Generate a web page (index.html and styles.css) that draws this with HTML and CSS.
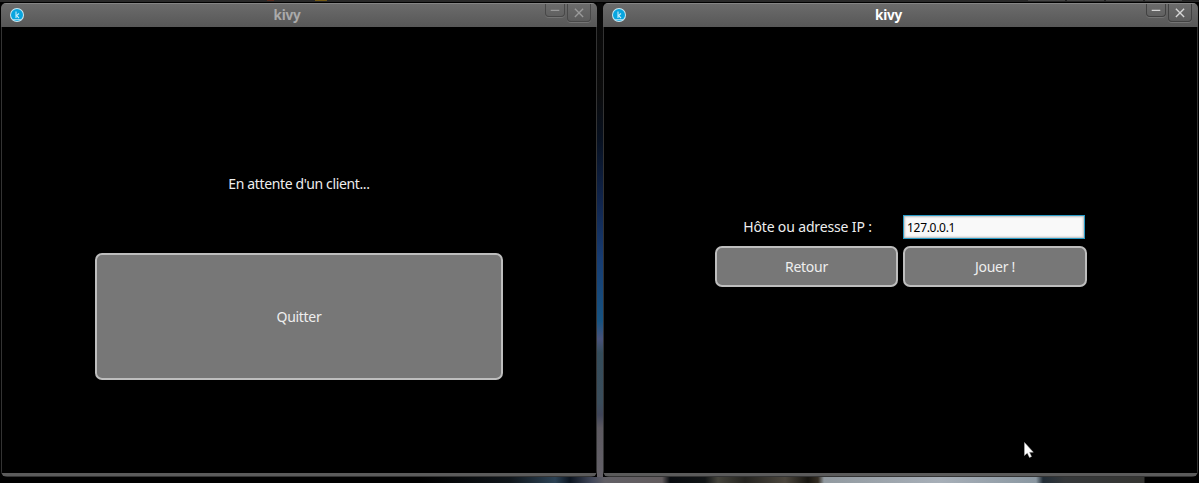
FILE: index.html
```html
<!DOCTYPE html>
<html lang="fr">
<head>
<meta charset="utf-8">
<title>kivy</title>
<link rel="stylesheet" href="styles.css">
</head>
<body>
<div class="desktop">
  <section class="window inactive">
    <header class="titlebar">
      <svg class="logo" viewBox="0 0 16 16"><circle cx="8" cy="8" r="7" fill="#c9eaf5"/><circle cx="8" cy="8" r="6" fill="#08a5df"/><path d="M7 4.5v6.5M10 6.5L7.6 8.6 10 11" fill="none" stroke="#c5ecfa" stroke-width="1.1"/><path d="M3.3 12.7h9.4" stroke="#b5e3f3" stroke-width="1"/></svg>
      <h1 class="title">kivy</h1>
      <div class="controls">
        <span class="control minimize"><svg viewBox="0 0 20 14"><path d="M5 7.5h10" stroke-width="1.5"/></svg></span>
        <span class="control close"><svg viewBox="0 0 24 18"><path d="M7.5 5l9 9M16.5 5l-9 9" stroke-width="1.5"/></svg></span>
      </div>
    </header>
    <main class="content waiting">
      <p class="message">En attente d'un client...</p>
      <button class="button quit">Quitter</button>
    </main>
    <footer class="frame-bottom"></footer>
  </section>
  <div class="wallpaper-gap"></div>
  <section class="window">
    <header class="titlebar">
      <svg class="logo" viewBox="0 0 16 16"><circle cx="8" cy="8" r="7" fill="#c9eaf5"/><circle cx="8" cy="8" r="6" fill="#08a5df"/><path d="M7 4.5v6.5M10 6.5L7.6 8.6 10 11" fill="none" stroke="#c5ecfa" stroke-width="1.1"/><path d="M3.3 12.7h9.4" stroke="#b5e3f3" stroke-width="1"/></svg>
      <h1 class="title">kivy</h1>
      <div class="controls">
        <span class="control minimize"><svg viewBox="0 0 20 14"><path d="M5 7.5h10" stroke-width="1.5"/></svg></span>
        <span class="control close"><svg viewBox="0 0 24 18"><path d="M7.5 5l9 9M16.5 5l-9 9" stroke-width="1.5"/></svg></span>
      </div>
    </header>
    <main class="content connect">
      <label class="label" for="host">Hôte ou adresse IP :</label>
      <input class="host" id="host" type="text" value="127.0.0.1">
      <button class="button">Retour</button>
      <button class="button">Jouer !</button>
    </main>
    <footer class="frame-bottom"></footer>
  </section>
  <svg class="cursor" viewBox="0 0 10 17"><path d="M.5.5v13l2.8-2.6 2.2 4.6 2-1-2.1-4.3h3.9z" fill="#fff" stroke="#bbb" stroke-width=".5"/></svg>
</div>
</body>
</html>
```
FILE: styles.css
```css
* { box-sizing: border-box; }
body {
  margin: 0;
  background: #000;
  font-family: "Noto Sans", "Open Sans", sans-serif;
}
.desktop {
  position: relative;
  width: 1199px;
  height: 483px;
  padding: 3px 1px 6px;
  display: grid;
  grid-template-columns: 596px 6px 595px;
  overflow: hidden;
  background:
    linear-gradient(#5a2a1c, #5a2a1c) 267px 0 / 7px 1px no-repeat,
    linear-gradient(#765b12, #765b12) 315px 0 / 12px 1px no-repeat,
    linear-gradient(90deg, #444 0 37px, #222 37px 39px, #444 39px 76px, #222 76px 78px, #444 78px 115px, #222 115px 117px, #444 117px 154px, #222 154px) 1028px 0 / 171px 1px no-repeat,
    linear-gradient(#292929, #292929) 0 0 / 1199px 2px no-repeat,
    linear-gradient(90deg, #000 0 420px, #10161b 510px, #2c4255 555px, #0b1420 570px, #42485a 592px, #626066 605px, #625c5e 662px, #090c10 670px, #111416 705px, #44433b 718px, #24231f 745px, #4b463d 785px, #171510 808px, #332c22 818px, #929aa0 824px, #a7afb8 940px, #8b98a2 1036px, #222d37 1043px, #35383a 1065px, #353532 1144px, #000 1145px) 0 477px / 1199px 6px no-repeat;
}
.wallpaper-gap {
  background: linear-gradient(#090909 0, #0b0b0b 90px, #07101f 135px, #10254d 200px, #173c72 255px, #175381 318px, #48527a 336px, #344c5a 350px, #3b4d5b 400px, #404559 412px, #5c5960 425px, #646168 474px);
}
.window {
  height: 474px;
  display: grid;
  grid-template-rows: 24px 446px 4px;
  border-radius: 5px 5px 6px 6px;
  overflow: hidden;
  background: #000;
}
.titlebar {
  display: grid;
  grid-template-columns: 60px 1fr 60px;
  border-top: 1px solid #858585;
  background: linear-gradient(#6b6b6b, #575757);
}
.logo { width: 16px; height: 16px; margin: 3px 0 0 8px; }
.title {
  margin: 0 0 0 -24px;
  font-size: 13.5px;
  line-height: 22px;
  font-weight: 700;
  letter-spacing: -.2px;
  text-align: center;
  color: #fff;
}
.controls { display: flex; gap: 2px; margin-left: 8px; }
.control {
  display: block;
  border: 1px solid #414141;
  border-top: 0;
  border-radius: 0 0 4px 4px;
  box-shadow: 0 1px 0 #747474;
}
.minimize { width: 20px; height: 13px; }
.close { width: 24px; height: 18px; }
.control svg { display: block; width: 100%; height: 100%; fill: none; stroke: #d5d5d5; }
.inactive .title { color: #aaa; }
.inactive .control svg { stroke: #999; }
.inactive .control { border-color: #484848; }
.content { border: 0 solid #333; border-width: 0 1px; background: #000; }
.waiting {
  display: grid;
  grid-template: 226px 127px / 408px;
  padding-left: 93px;
}
.message {
  margin: 0;
  padding-top: 147px;
  text-align: center;
  font-size: 14px;
  line-height: 20px;
  letter-spacing: -.36px;
  color: #eee;
}
.button {
  margin: 0;
  padding: 0;
  border: 2px solid #bebebe;
  border-radius: 7px;
  background: #777;
  font: 14px/20px "Noto Sans", "Open Sans", sans-serif;
  letter-spacing: -.3px;
  color: #eee;
}
.connect {
  display: grid;
  grid-template: 24px 41px / 183px 184px;
  gap: 7px 5px;
  padding: 188px 0 0 111px;
}
.label {
  padding-left: 2px;
  text-align: center;
  font-size: 14px;
  line-height: 24px;
  letter-spacing: -.15px;
  color: #eee;
}
.connect { align-content: start; }
.host {
  width: 182px;
  height: 24px;
  padding: 0 3px;
  border: 1px solid #299bc6;
  outline: 0;
  border-radius: 0;
  background: #f9f9f9;
  box-shadow: inset 0 0 2px 1px #bbb;
  font: 12px/20px "Noto Sans", "Open Sans", sans-serif;
  letter-spacing: -.3px;
  color: #000;
}
.frame-bottom { background: linear-gradient(#5b5b5b 0 3px, #333 3px); }
.cursor { position: absolute; left: 1024px; top: 442px; width: 10px; height: 17px; }
```
